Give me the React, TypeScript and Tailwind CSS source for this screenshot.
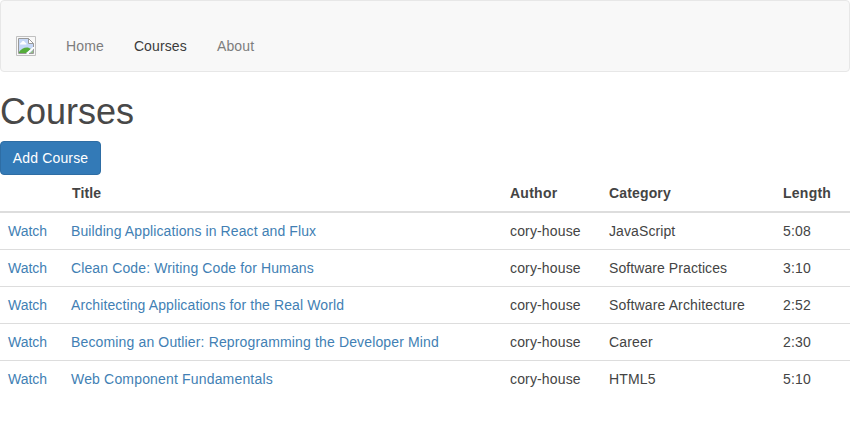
const courses = [
  { title: "Building Applications in React and Flux", titleClass: "tracking-[0.1px]", category: "JavaScript", categoryClass: "tracking-[0.1px]", length: "5:08" },
  { title: "Clean Code: Writing Code for Humans", titleClass: "tracking-[0.12px]", category: "Software Practices", categoryClass: "tracking-[0.08px]", length: "3:10" },
  { title: "Architecting Applications for the Real World", titleClass: "tracking-[0.11px]", category: "Software Architecture", categoryClass: "tracking-[0.14px]", length: "2:52" },
  { title: "Becoming an Outlier: Reprogramming the Developer Mind", titleClass: "tracking-[0.145px]", category: "Career", categoryClass: "tracking-[0.15px]", length: "2:30" },
  { title: "Web Component Fundamentals", titleClass: "tracking-[0.17px]", category: "HTML5", categoryClass: "tracking-[0.18px]", length: "5:10" },
];

function BrokenImage() {
  return (
    <svg width="20" height="20" viewBox="0 0 20 20">
      <path d="M.5.5h19v19H.5z" fill="none" stroke="#c0c0c0" />
      <path d="M2 2h11l5 5v11H2z" fill="#fff" />
      <path d="M3 3h9v5h5v9H3z" fill="#c6d8f7" />
      <path d="M4 8.500C4 7 5 6.500 5.500 6.500 6 4.500 8.500 4.500 9 6.500c1 0 1.500 1 1.500 2z" fill="#fff" />
      <path d="M3 17v-1c2-3 5.500-5 9-4.500l3 1.500-5 4z" fill="#55ad3a" />
      <path d="M2.500 17.500v-15h10l5 5v10z" fill="none" stroke="#999" />
      <path d="M12.500 2.500v5h5z" fill="#fff" stroke="#999" />
      <path d="M10.500 17l6.500-6h1v1.500L13 17v1h-2.500z" fill="#fff" />
      <path d="M14 17l3-3v3z" fill="#93bd85" />
    </svg>
  );
}

export default function App() {
  return (
    <div className="min-h-[431px] bg-white font-['Liberation_Sans',Arial,sans-serif] text-[14px] leading-5 text-[#444]">
      <nav className="flex h-[72px] items-start rounded-[4px] border border-[#e7e7e7] bg-[#f8f8f8] pl-[15px] pt-[35px] tracking-[0.13px] text-[#7d7d7d]">
        <a className="mr-[15px] block h-5 w-5"><BrokenImage /></a>
        <a className="px-[15px]">Home</a>
        <a className="px-[15px] text-[#3b3b3b]">Courses</a>
        <a className="px-[15px]">About</a>
      </nav>
      <h1 className="mt-5 mb-[10px] text-[36px] font-medium leading-[39px] text-[#484848]">Courses</h1>
      <button className="block h-[34px] w-[101px] rounded-[4px] border border-[#2e6da4] bg-[#337ab7] tracking-[0.15px] text-white">Add Course</button>
      <table className="w-full table-fixed border-collapse text-left">
        <colgroup>
          <col className="w-[63px]" />
          <col className="w-[439px]" />
          <col className="w-[99px]" />
          <col className="w-[174px]" />
          <col />
        </colgroup>
        <thead>
          <tr className="h-[37px] border-b-2 border-[#ddd] tracking-[0.25px]">
            <th />
            <th className="pl-[9px] tracking-[0.1px]">Title</th>
            <th className="px-2">Author</th>
            <th className="px-2 tracking-[0.15px]">Category</th>
            <th className="px-2">Length</th>
          </tr>
        </thead>
        <tbody>
          {courses.map((course, i) => (
            <tr key={course.title} className={i ? "h-[37px] border-t border-[#ddd]" : "h-[37px]"}>
              <td className="px-2 text-[#427fb4]">Watch</td>
              <td className="px-2 text-[#427fb4]"><span className={course.titleClass}>{course.title}</span></td>
              <td className="px-2 tracking-[0.15px]">cory-house</td>
              <td className="px-2"><span className={course.categoryClass}>{course.category}</span></td>
              <td className="px-2 tracking-[0.2px]">{course.length}</td>
            </tr>
          ))}
        </tbody>
      </table>
    </div>
  );
}
